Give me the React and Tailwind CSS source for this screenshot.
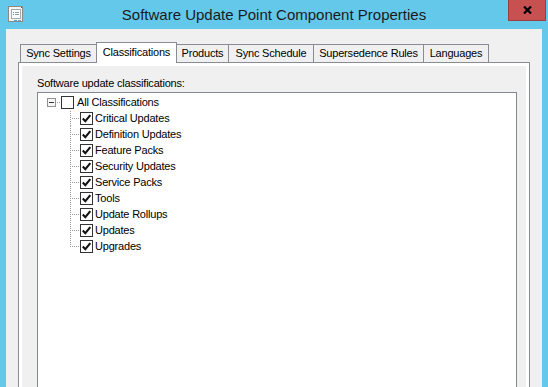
import React from 'react';

const tabs = [
  { label: 'Sync Settings', w: 'w-[77px]' },
  { label: 'Classifications', w: 'w-[81px]', active: true },
  { label: 'Products', w: 'w-[53px]' },
  { label: 'Sync Schedule', w: 'w-[86px]' },
  { label: 'Supersedence Rules', w: 'w-[111px]' },
  { label: 'Languages', w: 'w-[66px]' },
];

const classifications = [
  'Critical Updates',
  'Definition Updates',
  'Feature Packs',
  'Security Updates',
  'Service Packs',
  'Tools',
  'Update Rollups',
  'Updates',
  'Upgrades',
];

function Checkbox({ checked }) {
  return (
    <span className="w-[13px] h-[13px] shrink-0 border border-[#333333] bg-white flex items-center justify-center">
      {checked && (
        <svg width="11" height="11" viewBox="0 0 11 11">
          <path d="M1.8 5.6 L4.3 8.2 L9.3 2.2" fill="none" stroke="#111" strokeWidth="2.1" />
        </svg>
      )}
    </span>
  );
}

function WindowIcon() {
  return (
    <svg width="16" height="16" viewBox="0 0 16 16" shapeRendering="crispEdges">
      <rect x="0.5" y="0.5" width="14" height="15" fill="#f4f4f4" stroke="#8a8a8a" />
      <rect x="13" y="1" width="1" height="1" fill="#555" />
      <rect x="3" y="3" width="9" height="9" fill="#fff" stroke="#a8a8a8" />
      <rect x="5" y="6" width="1" height="1" fill="#3a8fd6" />
      <rect x="7" y="6" width="4" height="1" fill="#9a9a9a" />
      <rect x="5" y="8" width="1" height="1" fill="#3a8fd6" />
      <rect x="7" y="8" width="4" height="1" fill="#9a9a9a" />
      <rect x="6" y="14" width="3" height="1" fill="#3aa6e8" />
      <rect x="10" y="14" width="3" height="1" fill="#9a9a9a" />
    </svg>
  );
}

export default function App() {
  return (
    <div
      className="w-[548px] h-[387px] overflow-hidden bg-[#63c8ea] flex flex-col text-[11px] tracking-[-0.2px] text-black"
      style={{ fontFamily: '"Liberation Sans", Arial, sans-serif' }}
    >
      {/* Title bar */}
      <div className="h-[29px] flex shrink-0">
        <div className="w-[40px] pl-[8px] pt-[6px]">
          <WindowIcon />
        </div>
        <div className="flex-1 text-center text-[15px] tracking-normal leading-[29px] text-[#1b1b1b]">
          Software Update Point Component Properties
        </div>
        <div className="w-[40px] pr-[2px]">
          <div className="w-[38px] h-[21px] bg-[#c75050] border-x border-b border-[#9c3f3f] flex items-center justify-center">
            <svg width="9" height="8" viewBox="0 0 9 8">
              <path d="M1 0.5 L8 7.5 M8 0.5 L1 7.5" stroke="#000" strokeWidth="2.2" />
            </svg>
          </div>
        </div>
      </div>

      {/* Client area */}
      <div className="shrink-0 mx-[6px] bg-[#f0f0f0] flex flex-col pt-[13px]">
        {/* Tab strip */}
        <div className="flex items-end h-[20px] pl-[14px]">
          {tabs.map((t, i) =>
            t.active ? (
              <div
                key={t.label}
                className={`${t.w} h-[21px] -mb-px -ml-px relative z-10 bg-white border-x border-t border-[#898c95] flex items-center justify-center pb-[2px]`}
              >
                {t.label}
              </div>
            ) : (
              <div
                key={t.label}
                className={`${t.w} h-[18px] ${i === 0 ? '' : '-ml-px'} bg-[#f0f0f0] border-x border-t border-[#898c95] flex items-center justify-center`}
              >
                {t.label}
              </div>
            )
          )}
        </div>

        {/* Tab page */}
        <div className="mx-[12px] border border-[#898c95] bg-white p-[3px] flex flex-col">
          <div className="bg-[#f0f0f0] flex flex-col pl-[15px] pr-[9px] pt-[11px]">
            <div className="h-[13px] leading-[13px]">Software update classifications:</div>
            <div className="h-[340px] mt-[2px] border border-[#828790] bg-white pt-[1px]">
              {/* Root node */}
              <div className="h-[16px] flex items-center">
                <span className="w-[9px] shrink-0" />
                <span className="w-[9px] h-[9px] shrink-0 border border-[#919191] bg-[#f6f6f6] flex items-center justify-center">
                  <span className="w-[5px] h-px bg-[#333]" />
                </span>
                <svg width="5" height="16" className="shrink-0" shapeRendering="crispEdges">
                  <line x1="1" y1="8.5" x2="5" y2="8.5" stroke="#a0a0a0" strokeDasharray="1 1" />
                </svg>
                <Checkbox checked={false} />
                <span className="ml-[3px]">All Classifications</span>
              </div>

              {/* Child nodes */}
              {classifications.map((c, i) => {
                const last = i === classifications.length - 1;
                return (
                  <div key={c} className="h-[16px] flex items-center">
                    <span className="w-[32px] shrink-0" />
                    <svg width="10" height="16" className="shrink-0" shapeRendering="crispEdges">
                      <line
                        x1="0.5"
                        y1={i === 0 ? -1 : 0}
                        x2="0.5"
                        y2={last ? 9 : 16}
                        stroke="#a0a0a0"
                        strokeDasharray="1 1"
                      />
                      <line x1="2" y1="8.5" x2="10" y2="8.5" stroke="#a0a0a0" strokeDasharray="1 1" />
                    </svg>
                    <Checkbox checked />
                    <span className="ml-[2px]">{c}</span>
                  </div>
                );
              })}
            </div>
          </div>
        </div>
      </div>
    </div>
  );
}
